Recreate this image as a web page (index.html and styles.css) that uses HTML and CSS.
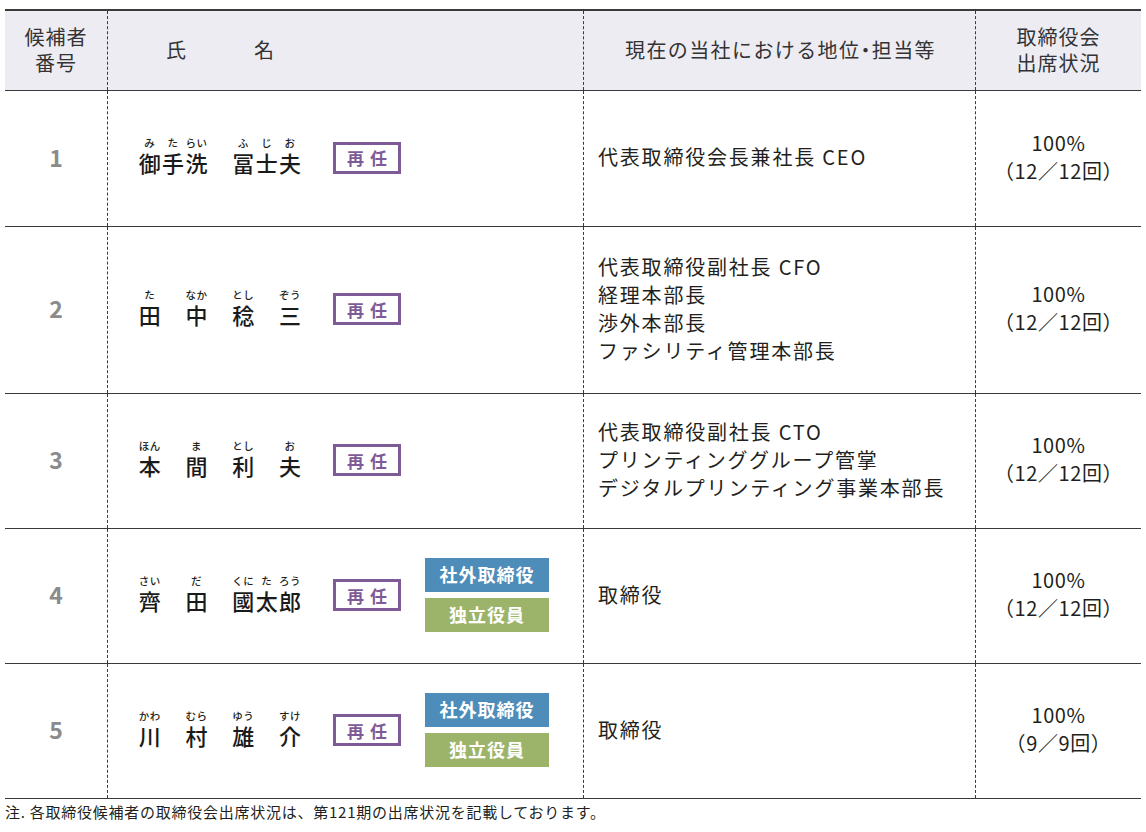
FILE: index.html
```html
<!DOCTYPE html>
<html lang="ja">
<head>
<meta charset="utf-8">
<title>取締役候補者</title>
<link rel="stylesheet" href="styles.css">
</head>
<body>
<div class="sheet">
  <div class="row head">
    <div class="cell c-no"><span>候補者<br>番号</span></div>
    <div class="cell c-name-h"><span class="h-shi">氏</span><span class="h-mei">名</span></div>
    <div class="cell c-pos-h"><span>現在の当社における地位<span class="md">・</span>担当等</span></div>
    <div class="cell c-att-h">取締役会<br>出席状況</div>
  </div>

  <div class="row r1">
    <div class="cell c-no num">1</div>
    <div class="cell c-name">
      <div class="nm">
        <span class="ch"><span class="rt">み</span><span class="kb">御</span></span>
        <span class="ch"><span class="rt">た</span><span class="kb">手</span></span>
        <span class="ch"><span class="rt">らい</span><span class="kb">洗</span></span>
        <span class="ch"></span>
        <span class="ch"><span class="rt">ふ</span><span class="kb">冨</span></span>
        <span class="ch"><span class="rt">じ</span><span class="kb">士</span></span>
        <span class="ch"><span class="rt">お</span><span class="kb">夫</span></span>
      </div>
      <div class="re"><span>再</span><span>任</span></div>
    </div>
    <div class="cell c-pos">代表取締役会長兼社長 CEO</div>
    <div class="cell c-att">100%<br>（12／12回）</div>
  </div>

  <div class="row r2">
    <div class="cell c-no num">2</div>
    <div class="cell c-name">
      <div class="nm">
        <span class="ch"><span class="rt">た</span><span class="kb">田</span></span>
        <span class="ch"></span>
        <span class="ch"><span class="rt">なか</span><span class="kb">中</span></span>
        <span class="ch"></span>
        <span class="ch"><span class="rt">とし</span><span class="kb">稔</span></span>
        <span class="ch"></span>
        <span class="ch"><span class="rt">ぞう</span><span class="kb">三</span></span>
      </div>
      <div class="re"><span>再</span><span>任</span></div>
    </div>
    <div class="cell c-pos">代表取締役副社長 CFO<br>経理本部長<br>渉外本部長<br>ファシリティ管理本部長</div>
    <div class="cell c-att">100%<br>（12／12回）</div>
  </div>

  <div class="row r3">
    <div class="cell c-no num">3</div>
    <div class="cell c-name">
      <div class="nm">
        <span class="ch"><span class="rt">ほん</span><span class="kb">本</span></span>
        <span class="ch"></span>
        <span class="ch"><span class="rt">ま</span><span class="kb">間</span></span>
        <span class="ch"></span>
        <span class="ch"><span class="rt">とし</span><span class="kb">利</span></span>
        <span class="ch"></span>
        <span class="ch"><span class="rt">お</span><span class="kb">夫</span></span>
      </div>
      <div class="re"><span>再</span><span>任</span></div>
    </div>
    <div class="cell c-pos">代表取締役副社長 CTO<br>プリンティンググループ管掌<br>デジタルプリンティング事業本部長</div>
    <div class="cell c-att">100%<br>（12／12回）</div>
  </div>

  <div class="row r4">
    <div class="cell c-no num">4</div>
    <div class="cell c-name">
      <div class="nm">
        <span class="ch"><span class="rt">さい</span><span class="kb">齊</span></span>
        <span class="ch"></span>
        <span class="ch"><span class="rt">だ</span><span class="kb">田</span></span>
        <span class="ch"></span>
        <span class="ch"><span class="rt">くに</span><span class="kb">國</span></span>
        <span class="ch"><span class="rt">た</span><span class="kb">太</span></span>
        <span class="ch"><span class="rt">ろう</span><span class="kb">郎</span></span>
      </div>
      <div class="re"><span>再</span><span>任</span></div>
      <div class="tags">
        <div class="tag tag-out">社外取締役</div>
        <div class="tag tag-ind">独立役員</div>
      </div>
    </div>
    <div class="cell c-pos">取締役</div>
    <div class="cell c-att">100%<br>（12／12回）</div>
  </div>

  <div class="row r5">
    <div class="cell c-no num">5</div>
    <div class="cell c-name">
      <div class="nm">
        <span class="ch"><span class="rt">かわ</span><span class="kb">川</span></span>
        <span class="ch"></span>
        <span class="ch"><span class="rt">むら</span><span class="kb">村</span></span>
        <span class="ch"></span>
        <span class="ch"><span class="rt">ゆう</span><span class="kb">雄</span></span>
        <span class="ch"></span>
        <span class="ch"><span class="rt">すけ</span><span class="kb">介</span></span>
      </div>
      <div class="re"><span>再</span><span>任</span></div>
      <div class="tags">
        <div class="tag tag-out">社外取締役</div>
        <div class="tag tag-ind">独立役員</div>
      </div>
    </div>
    <div class="cell c-pos">取締役</div>
    <div class="cell c-att">100%<br>（9／9回）</div>
  </div>

  <p class="note">注. 各取締役候補者の取締役会出席状況は、第121期の出席状況を記載しております。</p>
</div>
</body>
</html>
```

FILE: styles.css
```css
* { box-sizing: border-box; }

body {
  margin: 0;
  background: #ffffff;
  color: #231f20;
  font-family: "Noto Sans CJK JP", "Noto Sans", sans-serif;
}

.sheet {
  margin: 9px 0 0 5px;
  width: 1136px;
}

.row {
  display: grid;
  grid-template-columns: 102px 476px 392px 166px;
  border-bottom: 1px solid #3a3a3a;
}

.head {
  height: 82px;
  border-top: 2px solid #3a3a3a;
  background: #eeecf3;
  font-size: 20px;
  line-height: 26px;
  color: #333;
}

.head .cell {
  padding-bottom: 2px;
}

.r1 { height: 136px; }
.r2 { height: 167px; }
.r3, .r4, .r5 { height: 135px; }

.cell {
  display: flex;
  align-items: center;
}

.cell + .cell {
  border-left: 1px dashed #3a3a3a;
}

.c-no {
  justify-content: center;
  text-align: center;
  letter-spacing: 1px;
}

.c-name-h {
  padding-left: 58px;
}
.h-shi { margin-right: 68px; }

.c-pos-h {
  justify-content: center;
  letter-spacing: 1.4px;
  padding-left: 2px;
}

.md {
  margin: 0 -5px;
}

.c-att-h {
  justify-content: center;
  text-align: center;
  letter-spacing: 1px;
}

.num {
  font-size: 23px;
  font-weight: 700;
  color: #8b8b8b;
  letter-spacing: 0;
  padding-bottom: 4px;
}

.c-name {
  padding-left: 30px;
}

.nm {
  display: flex;
  width: 164px;
  flex: none;
  margin-bottom: 5px;
}

.ch {
  width: 23.4px;
  display: flex;
  flex-direction: column;
  align-items: center;
}

.rt {
  font-size: 10.5px;
  line-height: 12px;
  height: 12px;
  font-weight: 500;
  white-space: nowrap;
  letter-spacing: 0.5px;
  margin-bottom: 1px;
}

.kb {
  font-size: 22px;
  line-height: 25px;
  font-weight: 500;
  color: #1a1a1a;
}

.re {
  margin-left: 31px;
  width: 68px;
  height: 32px;
  border: 3px solid #7e5b97;
  color: #7e5b97;
  font-size: 17px;
  font-weight: 700;
  display: flex;
  align-items: center;
  justify-content: center;
  gap: 6px;
  flex: none;
  margin-bottom: 2px;
}

.tags {
  margin-left: 24px;
  display: flex;
  flex-direction: column;
  gap: 6px;
  flex: none;
  margin-bottom: 3px;
}

.tag {
  width: 124px;
  height: 34px;
  color: #ffffff;
  font-size: 18px;
  font-weight: 700;
  letter-spacing: 1px;
  display: flex;
  align-items: center;
  justify-content: center;
  padding-bottom: 1px;
}

.tag-out { background: #4e8dba; }
.tag-ind { background: #9cb46a; }

.c-pos {
  padding-left: 14px;
  padding-bottom: 3px;
  font-size: 20px;
  line-height: 28px;
  letter-spacing: 1.8px;
  color: #231f20;
}

.c-att {
  justify-content: center;
  text-align: center;
  padding-bottom: 4px;
  font-size: 20px;
  line-height: 28px;
  letter-spacing: 0.6px;
}

.note {
  margin: 3px 0 0 0;
  font-size: 15px;
  line-height: 20px;
  letter-spacing: 0.75px;
  color: #231f20;
}
```
